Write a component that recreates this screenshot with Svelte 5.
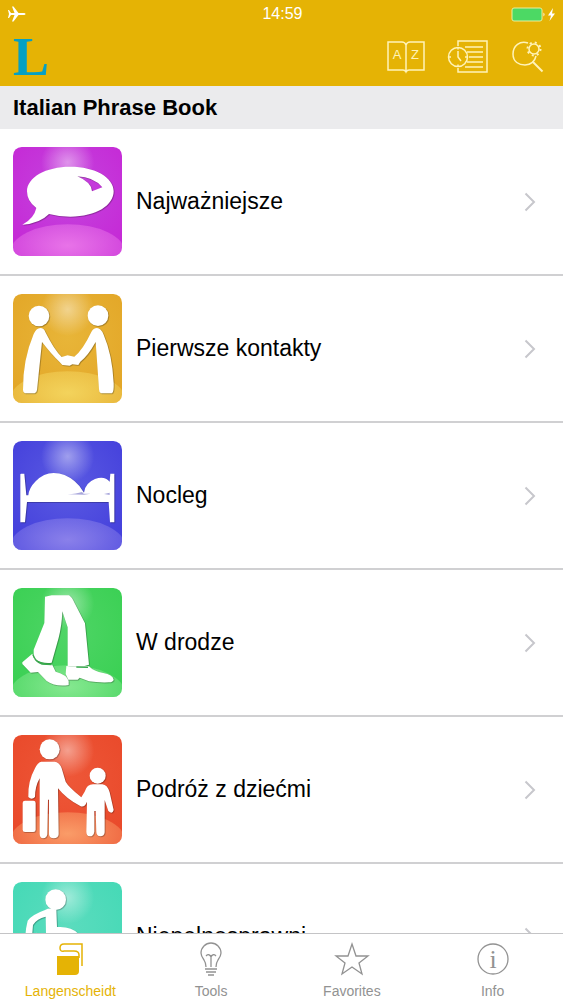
<script lang="ts">
	type Icon = 'speech' | 'greeting' | 'bed' | 'walking' | 'family' | 'wheelchair';

	interface Category {
		icon: Icon;
		label: string;
		/** Base, edge and floor colour of the tile. */
		colors: [string, string, string];
	}

	const categories: Category[] = [
		{ icon: 'speech', label: 'Najważniejsze', colors: ['#c445de', '#c52ad6', '#e873e8'] },
		{ icon: 'greeting', label: 'Pierwsze kontakty', colors: ['#e8b538', '#e3a728', '#f3d35c'] },
		{ icon: 'bed', label: 'Nocleg', colors: ['#5a5ae2', '#4541dc', '#8a80ea'] },
		{ icon: 'walking', label: 'W drodze', colors: ['#4fd566', '#3bd054', '#85e890'] },
		{ icon: 'family', label: 'Podróż z dziećmi', colors: ['#ee5738', '#e94a2b', '#fa9c68'] },
		{ icon: 'wheelchair', label: 'Niepełnosprawni', colors: ['#5bdcbe', '#45d9b6', '#8aeed6'] }
	];

	const tabs = ['Langenscheidt', 'Tools', 'Favorites', 'Info'];

	let active = $state('Langenscheidt');
</script>

<div class="app">
	<header>
		<div class="status">
			<svg width="18" height="18" viewBox="0 0 18 18" aria-label="Airplane mode">
				<path
					d="M0 5h1l2 3h3.500L4 1.500h1.500L10.500 8H16q1.500.200 1.500 1t-1.500 1h-5.500l-5 6.500H4L6.500 10H3l-2 3H0l1-4z"
					fill="#fff"
				/>
			</svg>
			<time>14:59</time>
			<svg class="power" width="46" height="15" viewBox="0 0 46 15" aria-label="Battery charging">
				<rect x="1" y="1" width="30" height="13" rx="2" fill="#4cd964" stroke="#e9ee9c" />
				<path d="M32.500 5.500q2 2 0 4z" fill="#fff" />
				<path d="M42 1l-5 7.500h3l-1.500 5.500 5.500-7.500h-3z" fill="#fff" />
			</svg>
		</div>
		<nav class="toolbar">
			<a class="logo" href="#home" aria-label="Langenscheidt">L</a>
			<button aria-label="Dictionary">
				<svg width="38" height="34" viewBox="0 0 38 34">
					<path
						d="M19 5q-1-3-4-3H1v28h15q2 0 3 2 1-2 3-2h15V2H23q-3 0-4 3zv27M19 5v27"
						class="line"
					/>
					<text x="10" y="19">A</text>
					<text x="28" y="19">Z</text>
				</svg>
			</button>
			<button aria-label="History">
				<svg width="42" height="36" viewBox="0 0 42 36">
					<path d="M11 7V2h29v31H11v-4" class="line" />
					<path
						d="M18 8h18M20 13h16M22 18h14M20 23h16M18 28h18"
						class="line"
					/>
					<circle cx="11" cy="18" r="9.500" class="line" />
					<path d="M11 12v6l3 4M1.500 18H4M18 18h2.500M11 8.500v2M11 25.500v2" class="line" />
				</svg>
			</button>
			<button aria-label="Search settings">
				<svg width="34" height="34" viewBox="0 0 34 34">
					<path d="M17 3C9 0 2 6 2 14s6 11 12 11 10-4 11-9" class="line" />
					<path d="M21.500 21.500l10 10" class="line thick" />
					<circle cx="23" cy="9" r="5" class="line" />
					<circle cx="23" cy="9" r="6.500" class="line teeth" />
				</svg>
			</button>
		</nav>
	</header>

	<h1>Italian Phrase Book</h1>

	<main>
		<ul>
			{#each categories as { icon, label, colors } (icon)}
				<li>
					<a href="#{icon}">
						<svg class="tile" viewBox="0 0 327 327" aria-hidden="true">
							<defs>
								<radialGradient id="base-{icon}" cx="0.5" cy="0.400" r="0.650">
									<stop offset="0" stop-color={colors[0]} />
									<stop offset="1" stop-color={colors[1]} />
								</radialGradient>
								<radialGradient id="floor-{icon}" cx="0.5" cy="0.400" r="0.600">
									<stop offset="0" stop-color={colors[2]} />
									<stop offset="1" stop-color={colors[2]} stop-opacity="0.300" />
								</radialGradient>
								<radialGradient id="glow-{icon}">
									<stop offset="0" stop-color="#fff" stop-opacity="0.450" />
									<stop offset="1" stop-color="#fff" stop-opacity="0" />
								</radialGradient>
								<clipPath id="clip-{icon}"><rect width="327" height="327" rx="26" /></clipPath>
							</defs>
							<g clip-path="url(#clip-{icon})">
								<rect width="327" height="327" fill="url(#base-{icon})" />
								<ellipse cx="164" cy="312" rx="170" ry="80" fill="url(#floor-{icon})" />
								<circle cx="164" cy="46" r="80" fill="url(#glow-{icon})" />
							</g>
							<g class="figure">
								{#if icon === 'speech'}
									<path
										fill-rule="evenodd"
										d="M172 59c74 0 130 32 130 74s-52 76-130 76q-35 0-64-8-28 29-80 32 35-18 42-50-28-20-28-50c0-42 56-74 130-74zM193 88Q236 106 237 133L268 121Q242 90 193 88z"
									/>
								{:else if icon === 'greeting'}
									<circle cx="78" cy="66" r="31" />
									<circle cx="255" cy="65" r="31" />
									<path
										d="M82 102q11 0 15 12 27 54 49 75l18-5 20 4q25-19 51-74 6-12 17-12 12 0 20 20 26 60 30 145 1 28-5 31h-33q-6-2-6-12l-10-142q-24 43-46 59l-6 10-18-2-8 4-22-2-9-10q-22-20-52-59L72 288q-1 8-7 10H36q-6-1-6-10-1-90 32-168 8-18 20-18z"
									/>
								{:else if icon === 'bed'}
									<path
										d="M24 98h10l6 65h6q2-22 22-42 24-25 54-25 34 0 63 25 17 14 28 34 3-29 33-41 29-10 44 8l2-24h12v146h-13l-4-61H42l-6 61H22V100z"
									/>
									<path d="M164 160q27-2 43-7l5 5h21l-20 3zM273 159l17-4v7z" class="shade" />
								{:else if icon === 'walking'}
									<path
										d="M96 26l20-4h52q9 5 17 24l31 60 12 124q-22 10-64 4V118l-16-48q-2 46-11 79l-21 75q-26 4-54-12L62 185l32-80z"
									/>
									<path
										d="M58 197q4 22 23 29 12 6 36 3l11 22q34 9 39 28v12q-40 6-66-12l-26-27-22 2-25-26v-5z"
									/>
									<path
										d="M160 234l30 2 38-1q15 16 43 20 28 5 31 20-1 7-14 8-35 1-60-3l-28-11-6 6h-28l-8-17z"
									/>
									<path d="M60 200q8 22 27 28l29 2M190 237l35 1" class="crease" />
								{:else if icon === 'family'}
									<circle cx="110" cy="43" r="30" />
									<path
										d="M85 80H125Q140 82 146 100L158 140Q166 155 205 187L215 170Q222 148 240 148H268Q284 150 290 172L302 225Q298 240 286 228L275 195V292Q274 304 262 304 250 302 250 290L248 228H244V290Q242 304 230 304 220 302 220 290L222 200Q215 218 203 214 160 192 135 160L137 298Q136 310 122 310 109 310 108 298V194H105L103 298Q101 310 90 310 80 308 80 296V130Q66 155 66 186 56 196 46 186 44 140 66 100 74 82 85 80z"
									/>
									<circle cx="254" cy="122" r="24" />
									<rect x="29" y="197" width="39" height="94" rx="7" />
								{:else}
									<circle cx="128" cy="53" r="31" />
									<path
										d="M96 84q15-8 34-1l2 52q43-3 64 20l30 78q8 15 35 12v18q-33 4-48-20l-30-68h-65q-18 0-19-17l-1-54q-26 5-38 25l-5 60q-7 9-19 0 0-44 8-73 13-18 52-32z"
									/>
									<path
										d="M75 160a72 72 0 1 0 101 83"
										fill="none"
										stroke="#fff"
										stroke-width="18"
									/>
								{/if}
							</g>
						</svg>
						<span>{label}</span>
						<svg class="chevron" width="12" height="20" viewBox="0 0 12 20" aria-hidden="true">
							<path d="M1.500 1.500l8.500 8.500-8.500 8.500" />
						</svg>
					</a>
				</li>
			{/each}
		</ul>
	</main>

	<nav class="tabs">
		{#each tabs as tab (tab)}
			<button class:active={active === tab} onclick={() => (active = tab)}>
				<svg width="36" height="36" viewBox="0 0 36 36" aria-hidden="true">
					{#if tab === 'Langenscheidt'}
						<path d="M5 16h22v15q0 4-4 4H5z" fill="currentColor" />
						<path
							d="M30 26V4H12q-4 0-4 4t4 3h10q5 0 5 4v3"
							fill="none"
							stroke="currentColor"
							stroke-width="1.500"
						/>
					{:else if tab === 'Tools'}
						<g fill="none" stroke="currentColor" stroke-width="1.300">
							<path d="M13 27q0-4-2-7-3-4-3-7a10 10 0 0 1 20 0q0 3-3 7-2 3-2 7" />
							<path d="M18 27V15M18 17q-2-4-5-1M18 17q2-4 5-1M12 29h12M13 32h10M15 35h6" />
						</g>
					{:else if tab === 'Favorites'}
						<path
							d="M18 4l4 12h12l-9 7 3 11-10-7-10 7 3-11-9-7h12z"
							fill="none"
							stroke="currentColor"
							stroke-width="1.300"
						/>
					{:else}
						<circle cx="18" cy="19" r="15" fill="none" stroke="currentColor" stroke-width="1.300" />
						<text x="18" y="28" class="letter">i</text>
					{/if}
				</svg>
				<span>{tab}</span>
			</button>
		{/each}
	</nav>
</div>

<style>
	:global(body) {
		margin: 0;
	}

	.app {
		display: flex;
		flex-direction: column;
		height: 100vh;
		font-family: 'Liberation Sans', Arial, sans-serif;
		color: #000;
		background: #fff;
	}

	button {
		padding: 0;
		font: inherit;
		color: inherit;
		background: none;
		border: 0;
		cursor: pointer;
	}

	svg {
		display: block;
		flex: none;
	}

	header {
		color: #fff;
		background: #e5b305;
	}

	.status {
		display: grid;
		grid-template-columns: 1fr auto 1fr;
		align-items: center;
		height: 28px;
		padding: 0 6px 0 8px;
		font-size: 16px;
	}

	.power {
		justify-self: end;
	}

	.toolbar {
		display: flex;
		align-items: center;
		gap: 22px;
		height: 58px;
		padding: 0 18px 0 13px;
	}

	.logo {
		margin-right: auto;
		font-family: 'Liberation Serif', serif;
		font-size: 54px;
		font-weight: bold;
		line-height: 56px;
		color: #05a0c4;
		text-decoration: none;
	}

	.line {
		fill: none;
		stroke: #fff3b8;
		stroke-width: 1.5;
	}

	.thick {
		stroke-width: 2;
	}

	.teeth {
		stroke-width: 2;
		stroke-dasharray: 2 3.1;
	}

	.toolbar text {
		font-size: 13px;
		fill: #fff3b8;
		text-anchor: middle;
	}

	h1 {
		margin: 0;
		padding: 0 13px;
		font-size: 22px;
		line-height: 43px;
		background: #ebebed;
	}

	main {
		flex: 1;
		min-height: 0;
		overflow-y: auto;
		scrollbar-width: none;
	}

	ul {
		margin: 0;
		padding: 0;
		list-style: none;
	}

	li a {
		display: flex;
		align-items: center;
		gap: 14px;
		padding: 18px 27px 18px 13px;
		font-size: 23px;
		color: inherit;
		text-decoration: none;
		border-bottom: 2px solid #d0d0d2;
	}

	.tile {
		width: 109px;
		height: 109px;
	}

	.figure {
		fill: #fff;
		filter: drop-shadow(2px 2px 2px rgb(0 0 0 / 35%));
	}

	.shade {
		fill: #aaa8dc;
	}

	.crease {
		fill: none;
		stroke: #3aa84e;
		stroke-width: 4;
	}

	.chevron {
		margin-left: auto;
		fill: none;
		stroke: #c7c7cc;
		stroke-width: 2;
	}

	.tabs {
		display: flex;
		height: 66px;
		background: #fff;
		border-top: 1px solid #c4c4c6;
	}

	.tabs button {
		display: flex;
		flex: 1 1 0;
		flex-direction: column;
		align-items: center;
		gap: 4px;
		padding-top: 6px;
		font-size: 14px;
		line-height: 22px;
		color: #929292;
	}

	.tabs .active {
		color: #e5b305;
	}

	.letter {
		font-family: 'Liberation Serif', serif;
		font-size: 26px;
		fill: currentColor;
		text-anchor: middle;
	}
</style>
